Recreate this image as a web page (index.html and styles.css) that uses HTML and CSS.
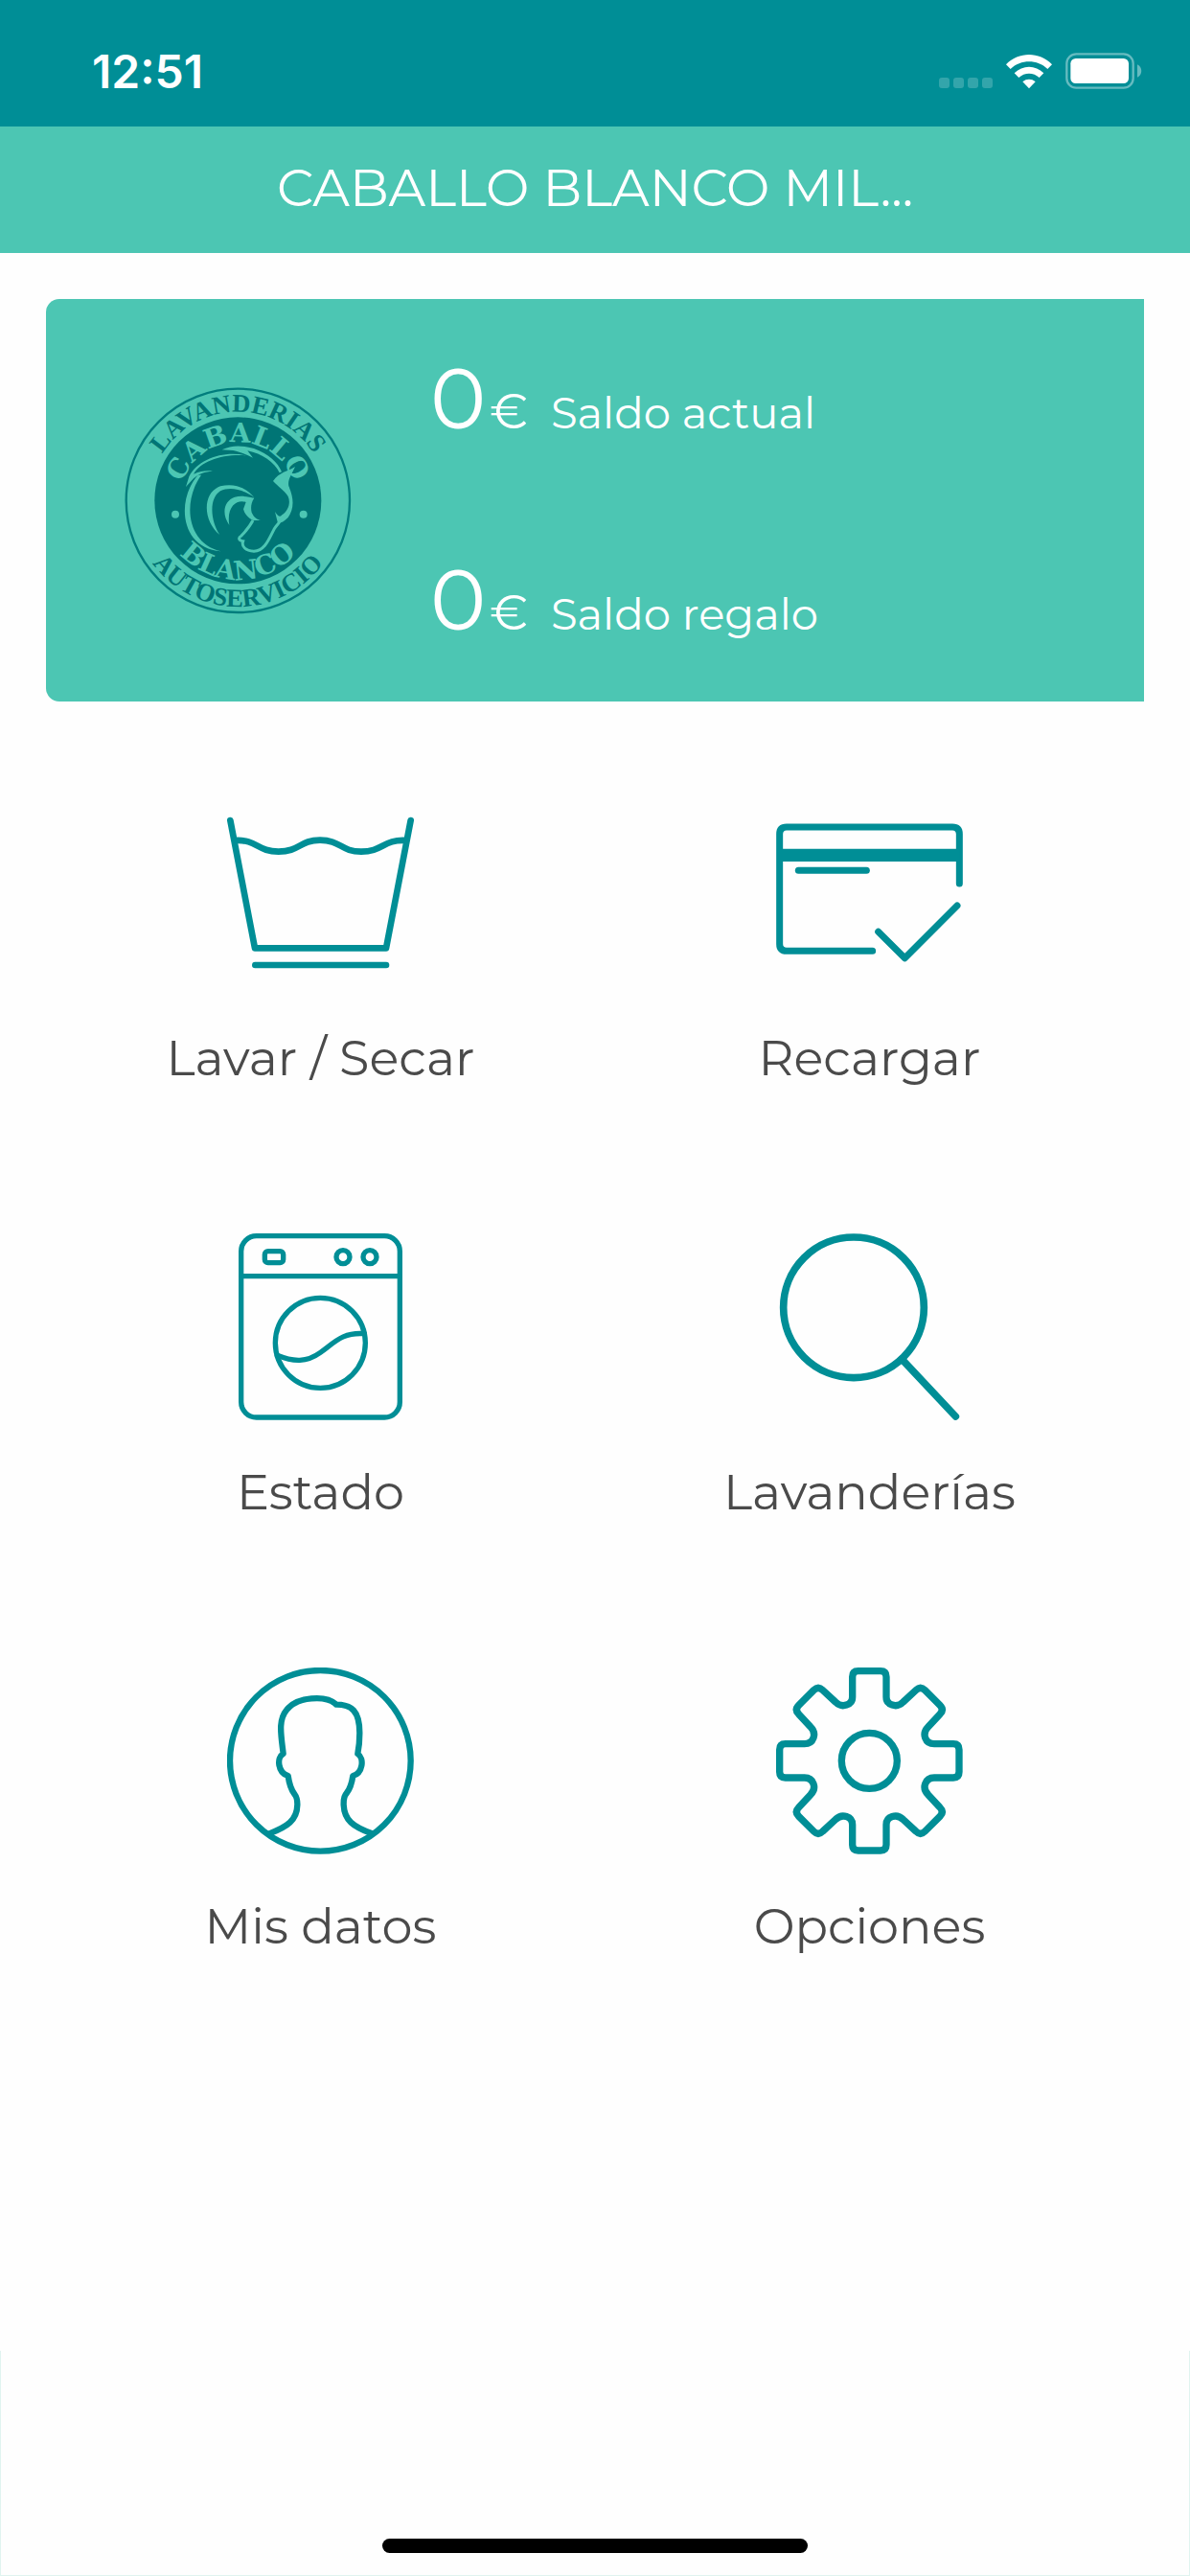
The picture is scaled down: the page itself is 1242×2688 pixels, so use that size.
FILE: index.html
```html
<!DOCTYPE html>
<html lang="es">
<head>
    <meta charset="UTF-8">
    <meta name="viewport" content="width=device-width, initial-scale=1.0">
    <title>Lavanderías Caballo Blanco</title>
    <link rel="stylesheet" href="styles.css">
</head>
<body>
    <div class="status-bar">
        <span class="status-time">12:51</span>
        <div class="status-icons">
            <svg class="signal-icon" viewBox="0 0 56 12">
                <rect x="0" y="0" width="11" height="11" rx="3"/>
                <rect x="15" y="0" width="11" height="11" rx="3"/>
                <rect x="30" y="0" width="11" height="11" rx="3"/>
                <rect x="45" y="0" width="11" height="11" rx="3"/>
            </svg>
            <svg class="wifi-icon" viewBox="0 0 144 108">
                <path d="M0 31 C40 -10 104 -10 144 31 L130 45 C98 14 46 14 14 45 Z"/>
                <path d="M26 58 C52 32 92 32 118 58 L104 72 C86 55 58 55 40 72 Z"/>
                <path d="M52 85 C64 75 80 75 92 85 L72 106 Z"/>
            </svg>
            <svg class="battery-icon" viewBox="0 0 240 114">
                <rect class="battery-case" x="4" y="4" width="208" height="106" rx="30"/>
                <rect x="16" y="18" width="182" height="78" rx="16"/>
                <path class="battery-cap" d="M225 37 C242 44 242 70 225 77 Z"/>
            </svg>
        </div>
    </div>

    <header class="title-bar">
        <h1>CABALLO BLANCO MIL...</h1>
    </header>

    <main class="container">
        <section class="balance-card">
            <svg class="logo" viewBox="60 70 711 711" role="img" aria-label="Lavanderías Caballo Blanco Autoservicio">
                <defs>
                    <path id="arcOuterTop" d="M137 425 A278 278 0 0 1 693 425"/>
                    <path id="arcOuterBottom" d="M83 425 A332 332 0 0 0 747 425"/>
                    <path id="arcInnerTop" d="M237 462 A182 182 0 1 1 593 462"/>
                    <path id="arcInnerBottom" d="M167 425 A248 248 0 0 0 663 425"/>
                </defs>
                <circle class="logo-ring" cx="415" cy="425" r="350"/>
                <circle class="logo-dark" cx="415" cy="425" r="261"/>

                <text class="logo-outer-text"><textPath href="#arcOuterTop" startOffset="50%">LAVANDERIAS</textPath></text>
                <text class="logo-outer-text"><textPath href="#arcOuterBottom" startOffset="50%">AUTOSERVICIO</textPath></text>
                <text class="logo-inner-text"><textPath href="#arcInnerTop" startOffset="50%">CABALLO</textPath></text>
                <text class="logo-inner-text"><textPath href="#arcInnerBottom" startOffset="50%">BLANCO</textPath></text>

                <circle class="logo-light" cx="219" cy="468" r="12"/>
                <circle class="logo-light" cx="620" cy="468" r="12"/>

                <!-- horse head: mane, curls, ear and face, jaw -->
                <path class="logo-light" d="M365 266 C395 250 430 252 465 262 C510 278 540 305 552 335 L545 338 C530 305 490 278 445 269 L462 291 C440 280 420 272 400 268 Z"/>
                <path class="logo-light" d="M440 284 C370 268 290 295 262 350 L252 382 L276 356 C295 340 310 335 336 333 C318 330 300 332 276 342 C300 300 370 278 440 284 Z"/>
                <path class="logo-light" d="M290 345 C222 420 232 575 362 584 C255 560 240 430 300 345 Z"/>
                <path class="logo-light" d="M358 532 C305 490 302 400 360 380 C410 368 445 390 466 415 C430 390 390 380 360 395 C322 420 330 490 358 532 Z"/>
                <path class="logo-light" d="M388 502 C362 465 372 425 405 414 C430 408 450 415 466 417 C455 432 455 450 458 462 C465 478 475 484 487 487 L462 487 C445 478 435 465 432 452 L440 430 C415 420 378 440 388 502 Z"/>
                <path class="logo-light" d="M525 364 C545 335 570 335 594 319 C582 345 570 360 574 380 C592 420 590 452 572 478 C560 490 548 497 540 496 L531 460 C540 475 548 478 553 470 C575 455 580 430 572 412 C565 398 545 385 525 364 Z"/>
                <path class="logo-line" d="M462 487 C450 510 440 520 426 535 C414 542 418 550 431 552 C425 570 440 582 465 584 C500 582 512 545 528 515 C536 502 542 498 545 492"/>
            </svg>
            <dl class="balances">
                <div class="balance">
                    <dd><span class="amount">0</span><span class="currency">€</span></dd>
                    <dt>Saldo actual</dt>
                </div>
                <div class="balance">
                    <dd><span class="amount">0</span><span class="currency">€</span></dd>
                    <dt>Saldo regalo</dt>
                </div>
            </dl>
        </section>

        <nav class="menu">
            <a href="#lavar">
                <svg class="menu-icon" viewBox="111 42 585 585" stroke-width="20">
                    <path d="M121 108 L198 508 H609 L686 108"/>
                    <path d="M136 171 C205 167 205 206 272 206 C338 206 338 170 402 170 C467 170 467 206 531 206 C598 206 600 167 671 171"/>
                    <path d="M199 561 H609"/>
                </svg>
                <span>Lavar / Secar</span>
            </a>
            <a href="#recargar">
                <svg class="menu-icon" viewBox="120 42 585 585" stroke-width="21">
                    <path d="M422 517 H153 Q131 517 131 495 V151 Q131 129 153 129 H672 Q694 129 694 151 V306"/>
                    <path d="M131 217 H694" stroke-width="40" stroke-linecap="butt"/>
                    <path d="M190 265 H403"/>
                    <path d="M440 457 L523 539 L687 375"/>
                </svg>
                <span>Recargar</span>
            </a>
            <a href="#estado">
                <svg class="menu-icon" viewBox="111 81 585 585" stroke-width="16">
                    <rect x="155" y="89" width="497" height="568" rx="48"/>
                    <path d="M155 215 H652"/>
                    <rect x="229" y="137" width="58" height="36" rx="10"/>
                    <circle cx="474" cy="155" r="21"/>
                    <circle cx="558" cy="155" r="21"/>
                    <circle cx="403" cy="424" r="141"/>
                    <path d="M268 463 C320 484 360 485 403 454 C450 420 474 390 541 395"/>
                </svg>
                <span>Estado</span>
            </a>
            <a href="#lavanderias">
                <svg class="menu-icon" viewBox="210 81 585 585" stroke-width="23">
                    <circle cx="453" cy="313" r="220"/>
                    <path d="M604 475 L772 654"/>
                </svg>
                <span>Lavanderías</span>
            </a>
            <a href="#datos">
                <svg class="menu-icon" viewBox="111 90 585 585" stroke-width="19">
                    <circle cx="403" cy="382" r="283"/>
                    <path d="M243 610 C300 588 330 568 331 520 C332 475 312 500 302 429 C270 420 265 372 287 360 C280 300 270 255 298 222 C330 182 420 175 453 206 C500 206 526 225 526 295 C526 325 523 345 520 360 C542 375 535 422 505 429 C495 498 475 470 476 520 C478 568 505 588 565 610"/>
                </svg>
                <span>Mis datos</span>
            </a>
            <a href="#opciones">
                <svg class="menu-icon" viewBox="-292 -292 585 585" stroke-width="22">
                    <circle cx="0" cy="0" r="87"/>
                    <path d="M-53 -200 V-263 Q-53 -281 -35 -281 H35 Q53 -281 53 -263 V-200 C53 -175 85 -163 106 -184 L146 -221 Q160 -235 174 -221 L221 -174 Q235 -160 221 -146 L184 -106 C163 -85 175 -53 203 -53 H263 Q281 -53 281 -35 V35 Q281 53 263 53 H203 C175 53 163 85 184 106 L221 146 Q235 160 221 174 L174 221 Q160 235 146 221 L106 184 C85 163 53 175 53 200 V263 Q53 281 35 281 H-35 Q-53 281 -53 263 V200 C-53 175 -85 163 -106 184 L-146 221 Q-160 235 -174 221 L-221 174 Q-235 160 -221 146 L-184 106 C-163 85 -175 53 -203 53 H-263 Q-281 53 -281 35 V-35 Q-281 -53 -263 -53 H-203 C-175 -53 -163 -85 -184 -106 L-221 -146 Q-235 -160 -221 -174 L-174 -221 Q-160 -235 -146 -221 L-106 -184 C-85 -163 -53 -175 -53 -200 Z"/>
                </svg>
                <span>Opciones</span>
            </a>
        </nav>
    </main>

    <footer class="bottom-area">
        <div class="home-indicator"></div>
    </footer>
</body>
</html>
```
FILE: styles.css
```css
* {
    box-sizing: border-box;
    margin: 0;
    padding: 0;
}

body {
    display: flex;
    flex-direction: column;
    min-height: 100vh;
    font-family: Montserrat, Inter, sans-serif;
    color: #4a4a4a;
    background-color: #fefefe;
}

.status-bar {
    display: flex;
    justify-content: space-between;
    align-items: center;
    height: 132px;
    padding: 16px 50px 0 96px;
    background-color: #008e96;
    color: #fff;
}

.status-time {
    font-family: Inter, sans-serif;
    font-size: 48px;
    font-weight: 600;
}

.status-icons {
    display: flex;
    align-items: flex-end;
    gap: 14px;
    fill: #fff;
}

.signal-icon {
    width: 56px;
    height: 12px;
    fill: #33a5ab;
}

.wifi-icon {
    width: 48px;
    height: 36px;
}

.battery-icon {
    width: 80px;
    height: 38px;
}

.battery-case {
    fill: none;
    stroke: #66bbc0;
    stroke-width: 7;
}

.battery-cap {
    fill: #66bbc0;
}

.title-bar {
    display: flex;
    justify-content: center;
    align-items: center;
    height: 132px;
    padding-bottom: 4px;
    background-color: #4cc6b3;
    color: #fff;
}

.title-bar h1 {
    font-size: 54px;
    font-weight: 400;
}

.container {
    padding: 48px;
}

.balance-card {
    display: flex;
    align-items: center;
    height: 420px;
    padding-left: 82px;
    background-color: #4cc6b3;
    border-radius: 14px 0 0 14px;
    color: #fff;
}

.logo {
    width: 237px;
    height: 237px;
    margin-right: 82px;
}

.logo-ring {
    fill: none;
    stroke: #007d7d;
    stroke-width: 7;
}

.logo-dark {
    fill: #007575;
}

.logo-light {
    fill: #4cc6b3;
}

.logo-line {
    fill: none;
    stroke: #4cc6b3;
    stroke-width: 9;
}

.logo-outer-text {
    font-family: "Liberation Serif", serif;
    font-size: 80px;
    font-weight: 700;
    fill: #007575;
    text-anchor: middle;
}

.logo-inner-text {
    font-family: "DejaVu Serif", serif;
    font-size: 84px;
    font-weight: 700;
    fill: #4cc6b3;
    text-anchor: middle;
}

.balance {
    display: flex;
    align-items: baseline;
    gap: 24px;
    height: 210px;
    padding-top: 50px;
}

.amount {
    font-size: 88px;
}

.currency {
    font-size: 50px;
    margin-left: 4px;
}

.balance dt {
    font-size: 45px;
}

.menu {
    display: grid;
    grid-template-columns: 1fr 1fr;
    row-gap: 153px;
    padding-top: 102px;
}

.menu a {
    display: flex;
    flex-direction: column;
    align-items: center;
    gap: 45px;
    color: #4a4a4a;
    font-size: 51px;
    line-height: 60px;
    text-decoration: none;
}

.menu-icon {
    width: 195px;
    height: 195px;
    fill: none;
    stroke: #008e96;
    stroke-linecap: round;
    stroke-linejoin: round;
}

.bottom-area {
    display: flex;
    justify-content: center;
    align-items: flex-end;
    height: 235px;
    margin-top: auto;
    padding-bottom: 23px;
    border: 1px solid #e0f4f0;
    border-top: none;
}

.home-indicator {
    width: 444px;
    height: 15px;
    background-color: #000;
    border-radius: 8px;
}
```
